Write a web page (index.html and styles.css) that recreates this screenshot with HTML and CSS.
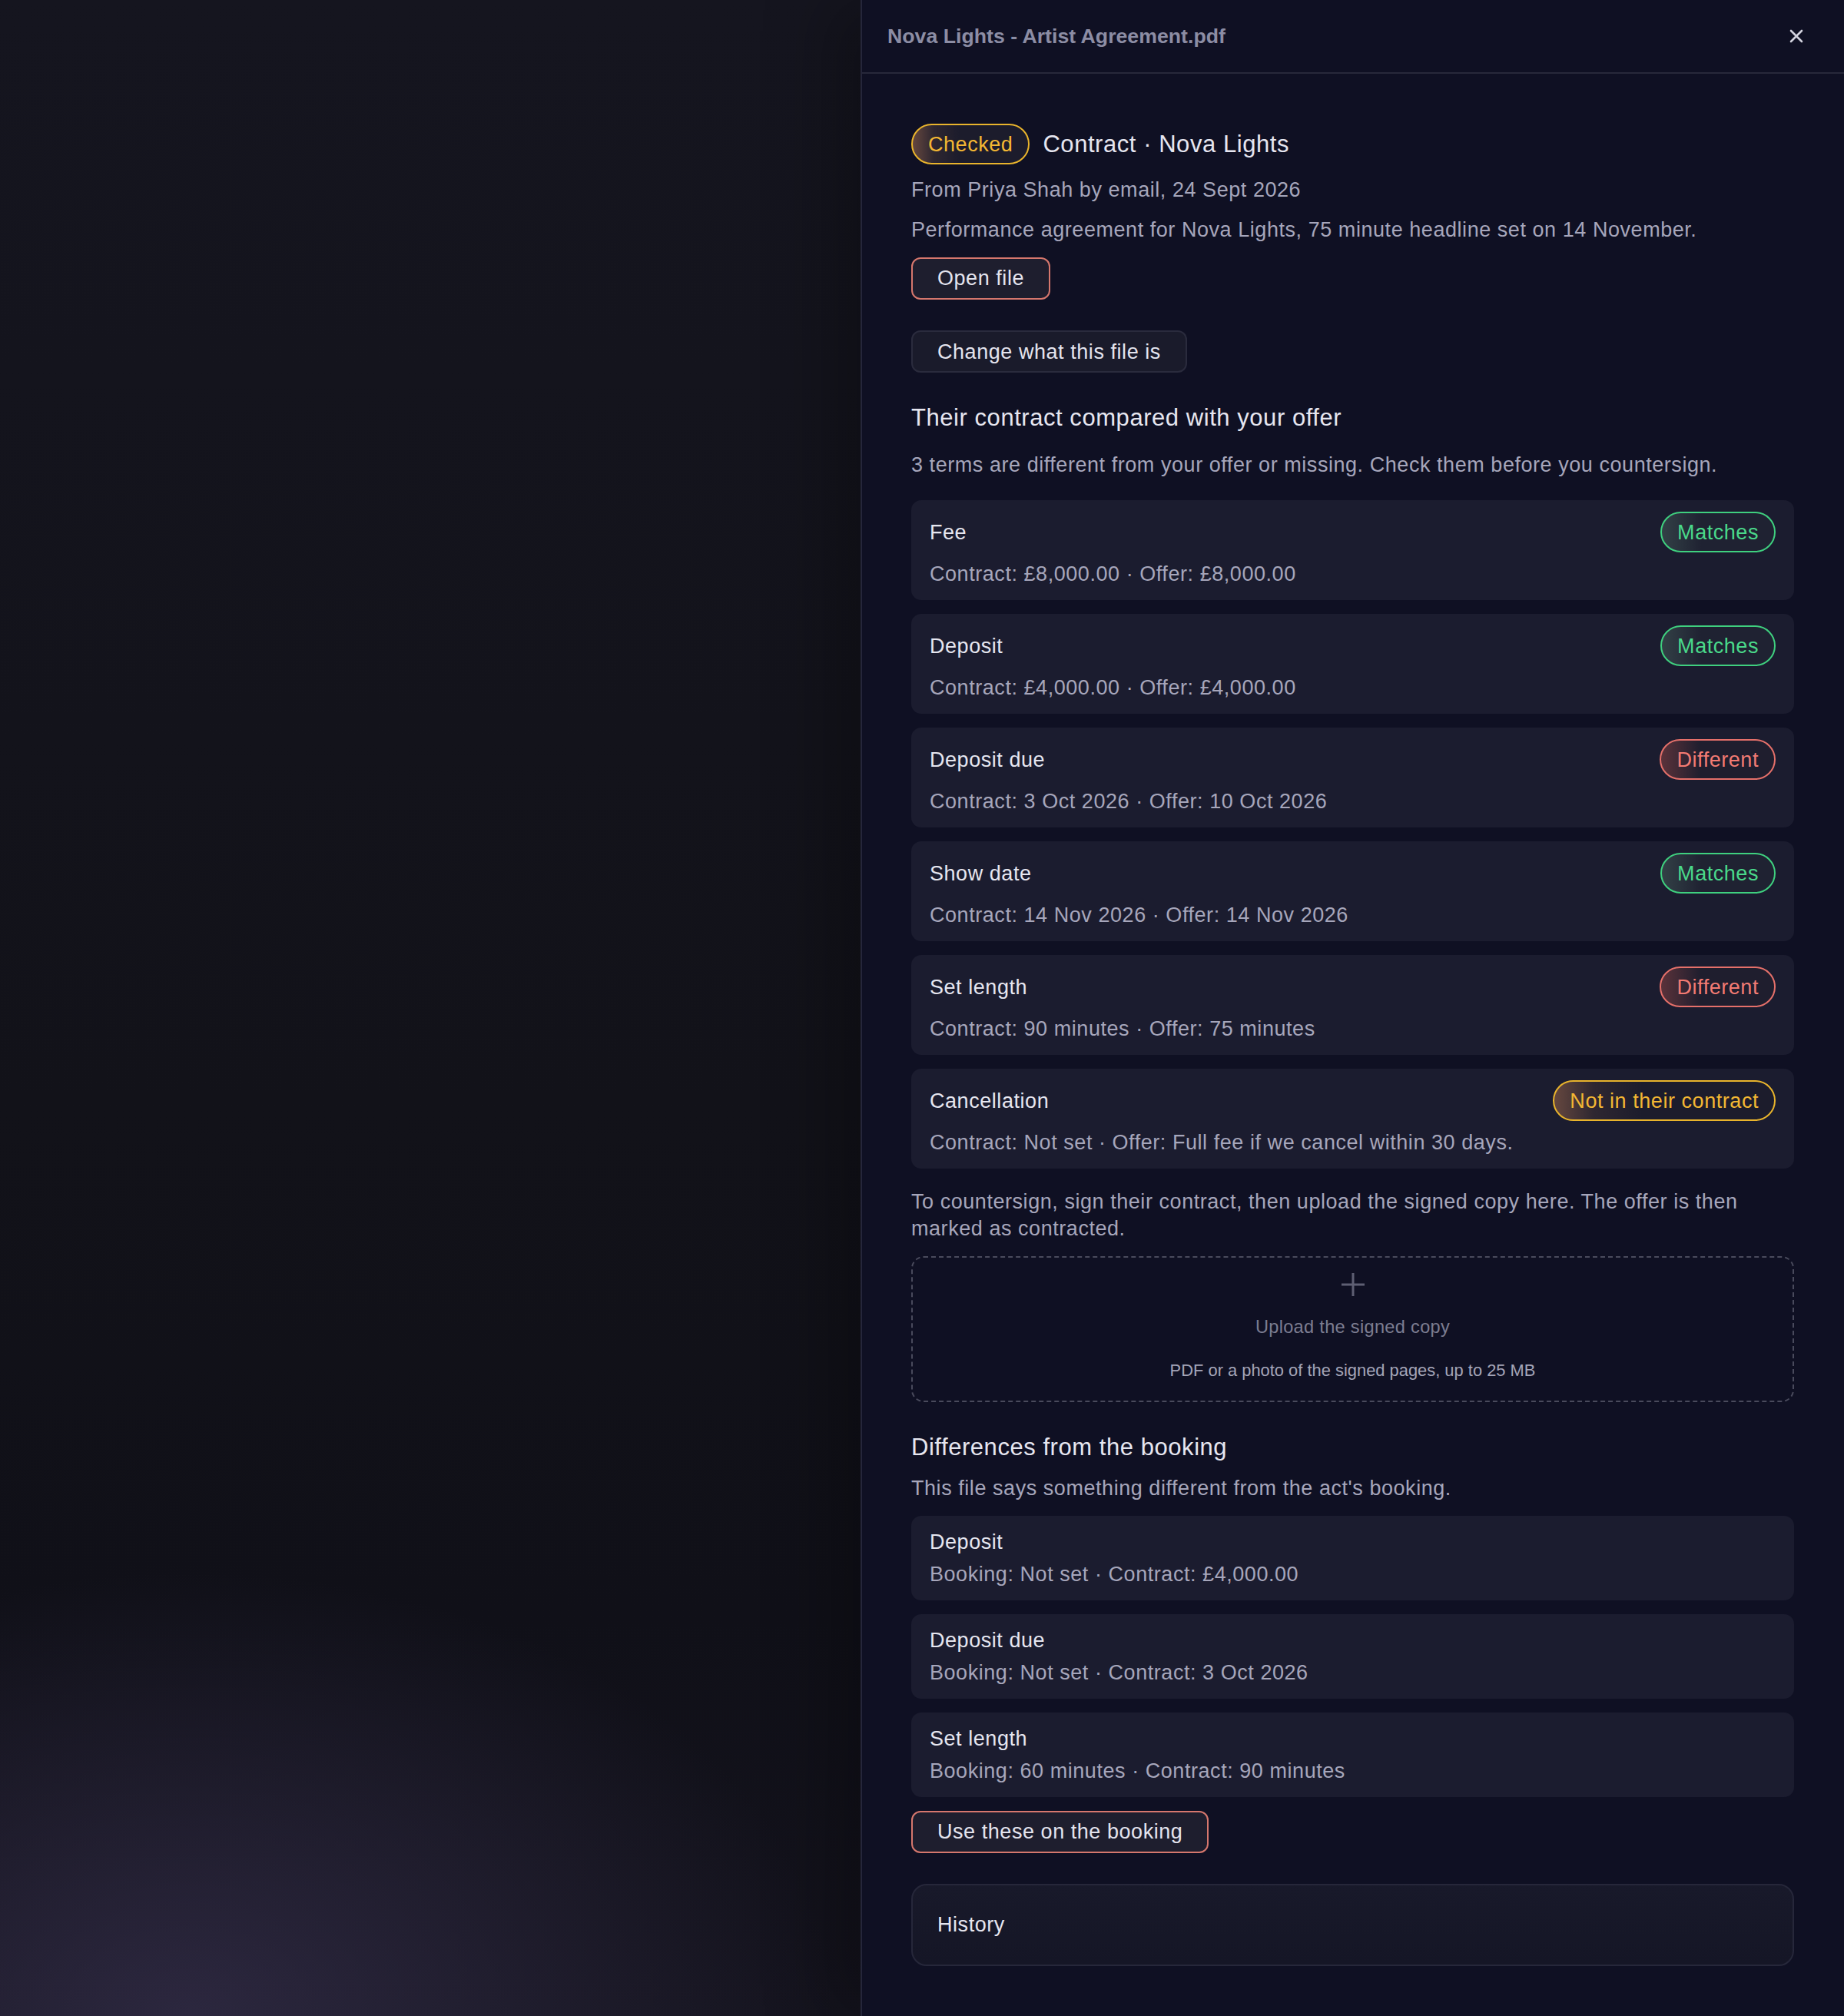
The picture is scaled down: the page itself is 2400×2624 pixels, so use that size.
FILE: index.html
```html
<!DOCTYPE html>
<html lang="en">
<head>
    <meta charset="UTF-8">
    <meta name="viewport" content="width=device-width, initial-scale=1.0">
    <title>Nova Lights - Artist Agreement.pdf</title>
    <link rel="stylesheet" href="styles.css">
</head>
<body>
    <div class="screen">
        <div class="backdrop"></div>

        <aside class="drawer">
            <header class="drawer-head">
                <h1>Nova Lights - Artist Agreement.pdf</h1>
                <button class="close" aria-label="Close">
                    <svg width="18" height="18" viewBox="0 0 18 18">
                        <path d="M2 2 L16 16 M16 2 L2 16" stroke="currentColor" stroke-width="2.6" stroke-linecap="round"/>
                    </svg>
                </button>
            </header>

            <div class="drawer-body">
                <div class="doc-title">
                    <span class="pill pill-warn">Checked</span>
                    <h2>Contract · Nova Lights</h2>
                </div>
                <p class="meta meta-from">From Priya Shah by email, 24 Sept 2026</p>
                <p class="meta meta-desc">Performance agreement for Nova Lights, 75 minute headline set on 14 November.</p>
                <button class="btn btn-accent btn-open">Open file</button>
                <button class="btn btn-plain btn-change">Change what this file is</button>

                <h3 class="section-title">Their contract compared with your offer</h3>
                <p class="meta section-note">3 terms are different from your offer or missing. Check them before you countersign.</p>

                <ul class="terms">
                    <li class="term">
                        <div class="term-head"><span class="term-name">Fee</span><span class="pill pill-ok">Matches</span></div>
                        <p class="term-value">Contract: £8,000.00 · Offer: £8,000.00</p>
                    </li>
                    <li class="term">
                        <div class="term-head"><span class="term-name">Deposit</span><span class="pill pill-ok">Matches</span></div>
                        <p class="term-value">Contract: £4,000.00 · Offer: £4,000.00</p>
                    </li>
                    <li class="term">
                        <div class="term-head"><span class="term-name">Deposit due</span><span class="pill pill-bad">Different</span></div>
                        <p class="term-value">Contract: 3 Oct 2026 · Offer: 10 Oct 2026</p>
                    </li>
                    <li class="term">
                        <div class="term-head"><span class="term-name">Show date</span><span class="pill pill-ok">Matches</span></div>
                        <p class="term-value">Contract: 14 Nov 2026 · Offer: 14 Nov 2026</p>
                    </li>
                    <li class="term">
                        <div class="term-head"><span class="term-name">Set length</span><span class="pill pill-bad">Different</span></div>
                        <p class="term-value">Contract: 90 minutes · Offer: 75 minutes</p>
                    </li>
                    <li class="term">
                        <div class="term-head"><span class="term-name">Cancellation</span><span class="pill pill-warn">Not in their contract</span></div>
                        <p class="term-value">Contract: Not set · Offer: Full fee if we cancel within 30 days.</p>
                    </li>
                </ul>

                <p class="meta countersign">To countersign, sign their contract, then upload the signed copy here. The offer is then marked as contracted.</p>

                <div class="upload">
                    <svg class="upload-plus" width="34" height="34" viewBox="0 0 34 34">
                        <path d="M17 2 V32 M2 17 H32" stroke="currentColor" stroke-width="3"/>
                    </svg>
                    <p class="upload-title">Upload the signed copy</p>
                    <p class="upload-hint">PDF or a photo of the signed pages, up to 25 MB</p>
                </div>

                <h3 class="section-title diff-title">Differences from the booking</h3>
                <p class="meta diff-note">This file says something different from the act's booking.</p>

                <ul class="diffs">
                    <li class="diff">
                        <p class="term-name">Deposit</p>
                        <p class="term-value">Booking: Not set · Contract: £4,000.00</p>
                    </li>
                    <li class="diff">
                        <p class="term-name">Deposit due</p>
                        <p class="term-value">Booking: Not set · Contract: 3 Oct 2026</p>
                    </li>
                    <li class="diff">
                        <p class="term-name">Set length</p>
                        <p class="term-value">Booking: 60 minutes · Contract: 90 minutes</p>
                    </li>
                </ul>

                <button class="btn btn-accent btn-use">Use these on the booking</button>

                <div class="history">History</div>
            </div>
        </aside>
    </div>
</body>
</html>
```

FILE: styles.css
```css
* {
    box-sizing: border-box;
}
body {
    margin: 0;
    font-family: "Liberation Sans", Arial, sans-serif;
    font-size: 27px;
    letter-spacing: 0.55px;
    color: #e4e4ee;
    background: #111119;
}
p, h1, h2, h3, ul {
    margin: 0;
    padding: 0;
}
ul {
    list-style: none;
}

.screen {
    display: flex;
    min-height: 2624px;
}

/* dimmed page behind the drawer */
.backdrop {
    flex: 1;
    background:
        radial-gradient(ellipse 75% 22% at 22% 100%, rgba(52, 46, 74, 0.75), rgba(52, 46, 74, 0) 100%),
        linear-gradient(180deg, #15151f 0%, #121219 55%, #101018 80%, #14131d 100%);
}

.drawer {
    width: 1280px;
    background: #0f1023;
    border-left: 2px solid #25263a;
    box-shadow: -40px 0 80px rgba(0, 0, 0, 0.25);
}

.drawer-head {
    height: 96px;
    display: flex;
    align-items: center;
    justify-content: space-between;
    padding: 0 53px 0 33px;
    border-bottom: 2px solid #27283a;
}
.drawer-head h1 {
    font-size: 26.7px;
    font-weight: bold;
    letter-spacing: 0;
    color: #8c8da4;
}
.close {
    background: none;
    border: none;
    padding: 0;
    color: #d2d2de;
    display: flex;
    cursor: pointer;
}

.drawer-body {
    padding: 65px 65px 60px 64px;
}

.doc-title {
    display: flex;
    align-items: center;
    gap: 17px;
}
.doc-title h2 {
    font-size: 31px;
    font-weight: normal;
    color: #e6e6f0;
}

.pill {
    display: inline-block;
    line-height: 36px;
    padding: 6.5px 20px;
    border: 2px solid;
    border-radius: 999px;
    white-space: nowrap;
}
.pill-warn {
    color: #f3b733;
    border-color: #e9b42c;
    background: linear-gradient(90deg, rgba(150, 100, 75, 0.6) 0%, rgba(150, 100, 75, 0.15) 18%, rgba(150, 100, 75, 0) 40%), #1c1c2c;
}
.pill-ok {
    color: #4ad98a;
    border-color: #3fd07f;
    background: linear-gradient(90deg, rgba(80, 110, 100, 0.4) 0%, rgba(80, 110, 100, 0) 35%), #1f2232;
}
.pill-bad {
    color: #f37b73;
    border-color: #e5706a;
    background: linear-gradient(90deg, rgba(150, 70, 70, 0.5) 0%, rgba(150, 70, 70, 0) 35%), #1f1e2e;
}

.meta {
    line-height: 36px;
    color: #a6a6bb;
}
.meta-from {
    margin-top: 15px;
}
.meta-desc {
    margin-top: 16px;
}

.btn {
    display: block;
    font-family: inherit;
    font-size: 27px;
    letter-spacing: 0.55px;
    line-height: 35px;
    padding: 8px 32px;
    border-radius: 12px;
    color: #e4e4ee;
    cursor: pointer;
}
.btn-accent {
    border: 2px solid #d6776d;
    background: #1e1e2e;
}
.btn-plain {
    border: 2px solid #2a2b3d;
    background: #1a1b2b;
}
.btn-open {
    margin-top: 18px;
}
.btn-change {
    margin-top: 40px;
    padding-top: 9px;
    padding-bottom: 7px;
}

.section-title {
    font-size: 31px;
    font-weight: normal;
    line-height: 40px;
    margin-top: 39px;
    color: #e6e6f0;
}
.section-note {
    margin-top: 23px;
}

.terms {
    margin-top: 28px;
    display: flex;
    flex-direction: column;
    gap: 18px;
}
.term {
    height: 130px;
    padding: 15px 24px 0;
    background: #1b1c2f;
    border-radius: 13px;
}
.term-head {
    display: flex;
    align-items: center;
    justify-content: space-between;
}
.term-head .term-name {
    padding-top: 2px;
}
.term-name {
    color: #e6e6f0;
    line-height: 35px;
}
.term-value {
    margin-top: 10px;
    line-height: 36px;
    color: #a6a6bb;
}

.countersign {
    margin-top: 26px;
    line-height: 35px;
}

.upload {
    margin-top: 18px;
    height: 190px;
    padding-top: 18px;
    border: 2px dashed #494a5c;
    border-radius: 16px;
    display: flex;
    flex-direction: column;
    align-items: center;
}
.upload-plus {
    color: #5e5f73;
}
.upload-title {
    margin-top: 23px;
    font-size: 23.6px;
    letter-spacing: 0.3px;
    line-height: 30px;
    color: #7c7d91;
}
.upload-hint {
    margin-top: 28px;
    font-size: 21.9px;
    letter-spacing: 0;
    line-height: 28px;
    color: #a4a5b8;
}

.diff-title {
    margin-top: 39px;
}
.diff-note {
    margin-top: 15px;
}

.diffs {
    margin-top: 18px;
    display: flex;
    flex-direction: column;
    gap: 18px;
}
.diff {
    height: 110px;
    padding: 17px 24px 0;
    background: #1b1c2f;
    border-radius: 13px;
}
.diff .term-value {
    margin-top: 7px;
    line-height: 35px;
}

.btn-use {
    margin-top: 18px;
}

.history {
    margin-top: 40px;
    height: 107px;
    display: flex;
    align-items: center;
    padding: 0 32px;
    border: 2px solid #26273a;
    border-radius: 20px;
    background: linear-gradient(180deg, #18192a, #151626);
    color: #e6e6f0;
}
```
